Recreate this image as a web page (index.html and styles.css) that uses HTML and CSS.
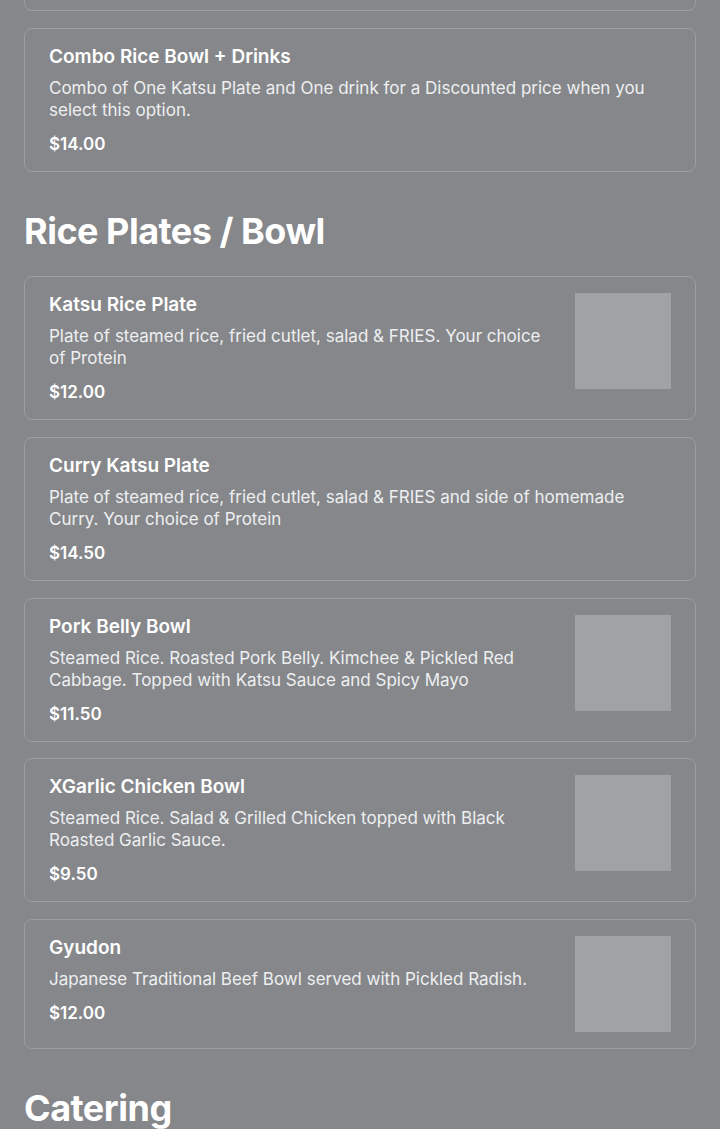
FILE: index.html
```html
<!DOCTYPE html>
<html lang="en">
<head>
    <meta charset="UTF-8">
    <meta name="viewport" content="width=device-width, initial-scale=1.0">
    <title>Menu</title>
    <link rel="stylesheet" href="styles.css">
</head>
<body>
    <main class="menu">
        <section class="section">
            <div class="item-list">
                <!-- previous item, scrolled out of view -->
                <div class="item">
                    <div class="item-info"></div>
                    <div class="item-photo"></div>
                </div>
                <div class="item">
                    <div class="item-info">
                        <div class="item-name">Combo Rice Bowl + Drinks</div>
                        <div class="item-desc">Combo of One Katsu Plate and One drink for a Discounted price when you select this option.</div>
                        <div class="item-price">$14.00</div>
                    </div>
                </div>
            </div>
        </section>

        <section class="section">
            <h2 class="section-title">Rice Plates / Bowl</h2>
            <div class="item-list">
                <div class="item">
                    <div class="item-info">
                        <div class="item-name">Katsu Rice Plate</div>
                        <div class="item-desc">Plate of steamed rice, fried cutlet, salad &amp; FRIES. Your choice of Protein</div>
                        <div class="item-price">$12.00</div>
                    </div>
                    <div class="item-photo"></div>
                </div>
                <div class="item">
                    <div class="item-info">
                        <div class="item-name">Curry Katsu Plate</div>
                        <div class="item-desc">Plate of steamed rice, fried cutlet, salad &amp; FRIES and side of homemade Curry. Your choice of Protein</div>
                        <div class="item-price">$14.50</div>
                    </div>
                </div>
                <div class="item">
                    <div class="item-info">
                        <div class="item-name">Pork Belly Bowl</div>
                        <div class="item-desc">Steamed Rice. Roasted Pork Belly. Kimchee &amp; Pickled Red Cabbage. Topped with Katsu Sauce and Spicy Mayo</div>
                        <div class="item-price">$11.50</div>
                    </div>
                    <div class="item-photo"></div>
                </div>
                <div class="item">
                    <div class="item-info">
                        <div class="item-name">XGarlic Chicken Bowl</div>
                        <div class="item-desc">Steamed Rice. Salad &amp; Grilled Chicken topped with Black Roasted Garlic Sauce.</div>
                        <div class="item-price">$9.50</div>
                    </div>
                    <div class="item-photo"></div>
                </div>
                <div class="item">
                    <div class="item-info">
                        <div class="item-name">Gyudon</div>
                        <div class="item-desc">Japanese Traditional Beef Bowl served with Pickled Radish.</div>
                        <div class="item-price">$12.00</div>
                    </div>
                    <div class="item-photo"></div>
                </div>
            </div>
        </section>

        <section class="section">
            <h2 class="section-title">Catering</h2>
        </section>
    </main>
</body>
</html>
```

FILE: styles.css
```css
body {
    font-family: Inter, "Noto Sans", sans-serif;
    background-color: #85878b;
    color: #ffffff;
    margin: 0;
    overflow: hidden;
}
.menu {
    padding: 0 24px;
    margin-top: -118.75px;
}
.section-title {
    font-size: 36px;
    line-height: 44px;
    font-weight: 700;
    letter-spacing: -0.5px;
    margin: 37px 0 23px;
}
.item-list {
    display: flex;
    flex-direction: column;
    gap: 16.75px;
}
.item {
    display: flex;
    gap: 24px;
    border: 1px solid #9b9ea1;
    border-radius: 8px;
    padding: 16px 24px;
}
.item-info {
    flex: 1;
}
.item-name {
    font-size: 19px;
    line-height: 24px;
    font-weight: 600;
}
.item-desc {
    font-size: 17px;
    line-height: 22px;
    color: #eeeff0;
    margin-top: 8px;
}
.item-price {
    font-size: 17px;
    line-height: 22px;
    font-weight: 600;
    margin-top: 12px;
}
.item-photo {
    flex: none;
    width: 96px;
    height: 96px;
    background-color: #a0a3a6;
}
```
